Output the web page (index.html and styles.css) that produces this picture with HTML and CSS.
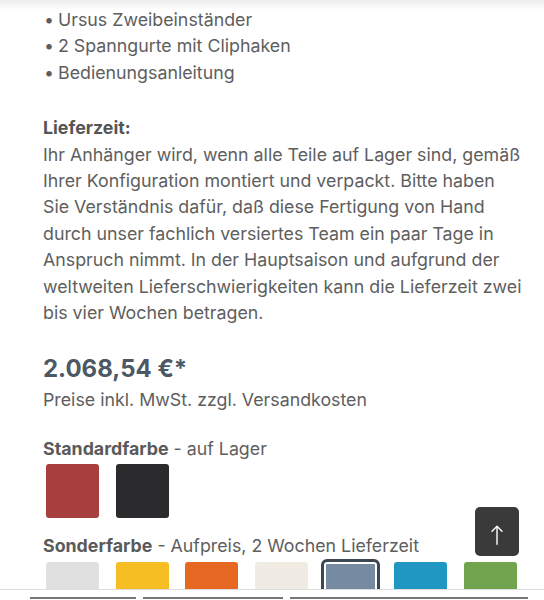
FILE: index.html
```html
<!DOCTYPE html>
<html lang="de">
<head>
<meta charset="utf-8">
<title>Produkt</title>
<link rel="stylesheet" href="styles.css">
</head>
<body>
<div class="top-shade"></div>
<main class="content">
  <ul class="items">
    <li>Ursus Zweibeinständer</li>
    <li>2 Spanngurte mit Cliphaken</li>
    <li>Bedienungsanleitung</li>
  </ul>
  <p class="delivery"><strong>Lieferzeit:</strong><br>Ihr Anhänger wird, wenn alle Teile auf Lager sind, gemäß Ihrer Konfiguration montiert und verpackt. Bitte haben Sie Verständnis dafür, daß diese Fertigung von Hand durch unser fachlich versiertes Team ein paar Tage in Anspruch nimmt. In der Hauptsaison und aufgrund der weltweiten Lieferschwierigkeiten kann die Lieferzeit zwei bis vier Wochen betragen.</p>
  <div class="price">2.068,54 €*</div>
  <div class="tax">Preise inkl. MwSt. zzgl. Versandkosten</div>
  <div class="color-label"><strong>Standardfarbe</strong> - auf Lager</div>
  <div class="swatches">
    <span class="swatch red"></span>
    <span class="swatch black"></span>
  </div>
  <div class="color-label special"><strong>Sonderfarbe</strong> - Aufpreis, 2 Wochen Lieferzeit</div>
  <div class="swatches second">
    <span class="swatch grey"></span>
    <span class="swatch yellow"></span>
    <span class="swatch orange"></span>
    <span class="swatch beige"></span>
    <span class="swatch steel selected"></span>
    <span class="swatch blue"></span>
    <span class="swatch green"></span>
  </div>
</main>
<button class="to-top" aria-label="Nach oben">
  <svg width="12" height="20" viewBox="0 0 12 20"><path d="M6 19.2V1.2M1 6.2L6 1.2l5 5" fill="none" stroke="#fff" stroke-width="1.4" stroke-linecap="round" stroke-linejoin="round"/></svg>
</button>
<div class="bottom-bar">
  <span class="bb-btn b1"></span>
  <span class="bb-btn b2"></span>
  <span class="bb-btn b3"></span>
</div>
</body>
</html>
```
FILE: styles.css
```css
html, body {
  margin: 0;
  padding: 0;
  background: #fff;
}
body {
  font-family: Inter, "Noto Sans", sans-serif;
  color: #5e5e5e;
  font-size: 17.8px;
  line-height: 26.4px;
  height: 600px;
  overflow: hidden;
}
.top-shade {
  position: fixed;
  top: 0;
  left: 0;
  right: 0;
  height: 10px;
  background: linear-gradient(#ececec, rgba(255,255,255,0));
}
.content {
  padding: 7px 0 0 43px;
  width: 481px;
}
.items {
  list-style: none;
  margin: 0 0 29px;
  padding: 0;
}
.items li::before {
  content: "•";
  margin-right: 4px;
  margin-left: 1px;
}
.delivery {
  margin: 0;
}
.delivery strong {
  color: #555;
}
.price {
  margin-top: 25px;
  font-size: 24px;
  font-weight: 700;
  color: #4c5864;
  line-height: 36px;
}
.color-label {
  margin-top: 22px;
}
.color-label strong {
  color: #5a5a5a;
}
.color-label.special {
  margin-top: 15px;
}
.swatches {
  display: flex;
  gap: 16.6px;
  margin: 2px 0 0 3px;
}
.swatches.second {
  margin-top: 2px;
}
.swatch {
  width: 53px;
  height: 54px;
  border-radius: 3px;
  flex: none;
}
.red { background: #a63f3e; }
.black { background: #2b2b2d; }
.grey { background: #e0e0e0; }
.yellow { background: #f7be23; }
.orange { background: #e66823; }
.beige { background: #f0ece3; }
.steel { background: #768ba1; }
.blue { background: #2096c3; }
.green { background: #72a450; }
.selected {
  box-shadow: inset 0 0 0 2px #fff;
  outline: 3px solid #3d4752;
}
.to-top {
  position: fixed;
  right: 25px;
  bottom: 44px;
  width: 44px;
  height: 49px;
  border: none;
  border-radius: 5px;
  background: #3a3a3a;
  padding: 6px 0 0;
  display: flex;
  align-items: center;
  justify-content: center;
}
.bottom-bar {
  position: fixed;
  left: 0;
  right: 0;
  bottom: 0;
  height: 10px;
  background: #fff;
  border-top: 1.5px solid #dcdcdc;
  display: flex;
  align-items: flex-end;
}
.bb-btn {
  height: 1px;
  border-top: 2px solid #777;
  flex: none;
}
.b1 { margin-left: 30px; width: 106px; }
.b2 { margin-left: 7px; width: 140px; }
.b3 { margin-left: 7px; width: 238px; }
```
